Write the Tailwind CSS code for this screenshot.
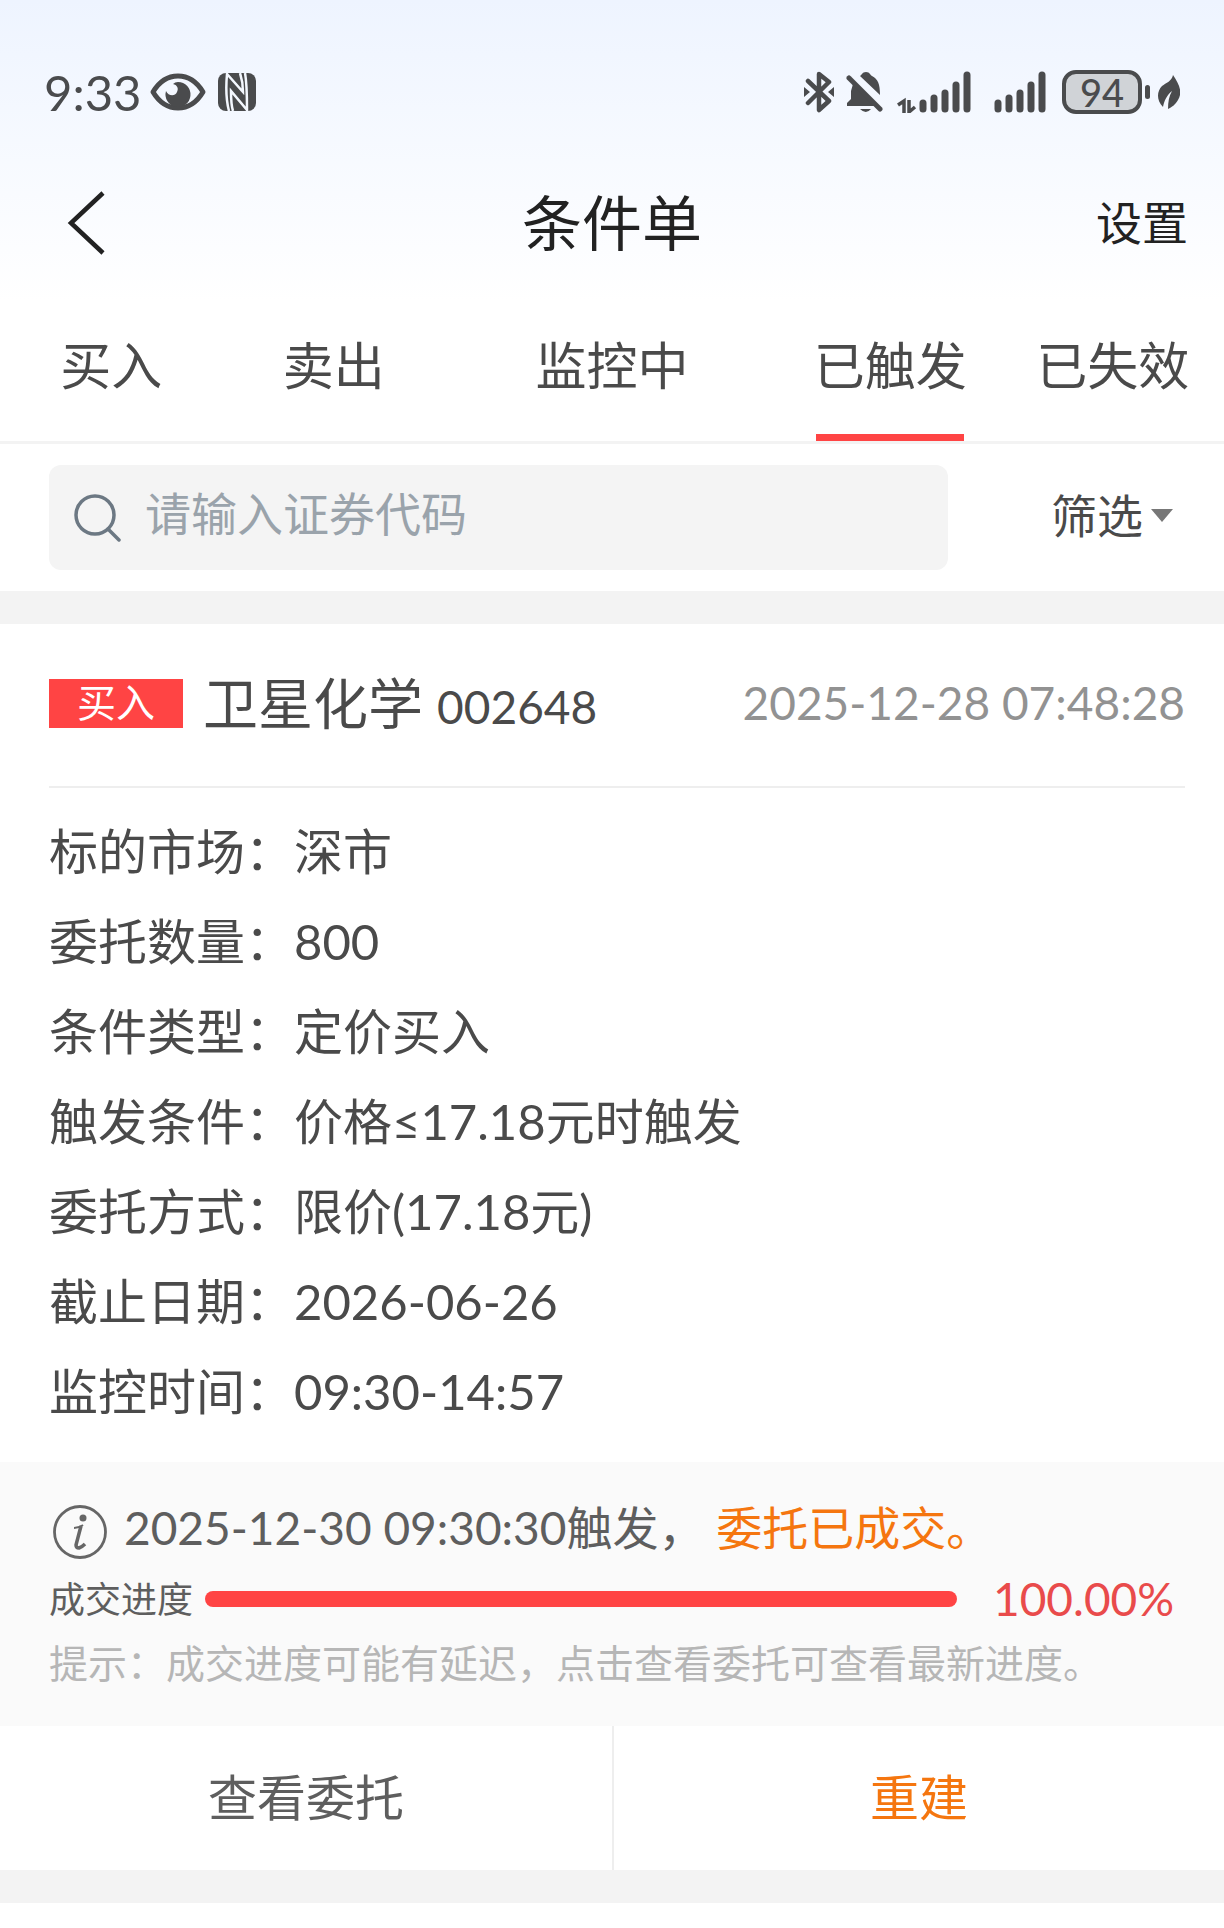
<!DOCTYPE html>
<html lang="zh-CN">
<head>
	<meta charset="UTF-8">
	<meta name="viewport" content="width=device-width, initial-scale=1.0">
	<script src="https://cdn.jsdelivr.net/npm/@tailwindcss/browser@4"></script>
	<title>条件单</title>
</head>

<body class="bg-white font-[Lato,'Noto_Sans_CJK_SC',sans-serif] text-[#4a4a4a]">
	<!-- Status bar + title -->
	<header class="bg-linear-to-b from-[#eef4ff] to-white">
		<div class="flex h-36 items-center justify-between pt-10 pr-11 pl-11 text-[#4a4b4d]">
			<div class="flex items-center">
				<span class="text-[49px] leading-none">9:33</span>
				<svg class="ml-2 h-10 w-14" viewBox="0 0 56 40" fill="none">
					<path d="M3 20C9 10 18 4 28 4s19 6 25 16C47 30 38 36 28 36S9 30 3 20Z" stroke="currentColor" stroke-width="5" stroke-linejoin="round"/>
					<path d="M28 10a12.500 12.500 0 1 1-12 9c2 5 9 6 11 1 2-4 0-7-4-8q2-2 5-2Z" fill="currentColor"/>
				</svg>
				<svg class="ml-3 h-[38px] w-[38px]" viewBox="0 0 38 38">
					<rect width="38" height="38" rx="8" fill="currentColor"/>
					<path d="M11 38C8 27 8 12 9 1l16 18C25 12 24 6 22 0M27 0c2 11 2 26 2 37L13 18c0 8 0 14 2 20" fill="none" stroke="#f4f8ff" stroke-width="2.500"/>
				</svg>
			</div>
			<div class="flex items-center">
				<svg class="h-[42px] w-[30px]" viewBox="0 0 30 42" fill="none">
					<path d="M4 10l21 20-10 9V3l10 8L4 32" stroke="currentColor" stroke-width="4.5" stroke-linejoin="round" stroke-linecap="round"/>
					<path d="M0 16l6 5-6 5zM30 16l-6 5 6 5z" fill="currentColor"/>
				</svg>
				<svg class="ml-3 h-[42px] w-[38px]" viewBox="0 0 38 42">
					<path d="M14 5c2-1 2-4 6-4s4 3 6 4c6 3 8 8 8 19z" fill="currentColor"/>
					<path d="M7 13L30 35H1v-3l4-4V20z" fill="currentColor"/>
					<path d="M3 7l31 31" stroke="currentColor" stroke-width="5" stroke-linecap="round"/>
					<path d="M14 38h11q-5 6-11 0z" fill="currentColor"/>
				</svg>
				<svg class="ml-3 h-[42px] w-[76px]" viewBox="0 0 76 42" fill="none" stroke="currentColor">
					<path d="M2 34l6-4v12M13 29v12l6-5" stroke-width="3.5"/>
					<path d="M27 32v6M38 27v11M49 22v16M60 14v24M71 4v34" stroke-width="7" stroke-linecap="round"/>
				</svg>
				<svg class="ml-5 h-[42px] w-[54px]" viewBox="0 0 54 42" fill="none" stroke="currentColor">
					<path d="M6 32v6M17 27v11M28 22v16M39 14v24M50 4v34" stroke-width="7" stroke-linecap="round"/>
				</svg>
				<div class="ml-4 flex h-11 w-20 items-center justify-center rounded-[14px] border-4 border-current bg-[#d0d3d7] text-[38px] leading-none font-medium">94</div>
				<div class="ml-[3px] h-[14px] w-[5px] rounded-full bg-[#4a4b4d]"></div>
				<svg class="ml-2 h-[34px] w-[22px]" viewBox="0 0 22 34">
					<path d="M15 0c6 9 10 17 5 25-3 5-6 7-10 9 0-7 1-13 4-18C9 20 6 26 5 32-2 25-1 16 4 11 8 8 14 6 15 0Z" fill="currentColor"/>
				</svg>
			</div>
		</div>
		<div class="grid h-[158px] grid-cols-3 items-center px-9 text-[#222222]">
			<button class="ml-7 justify-self-start" aria-label="返回">
				<svg class="h-[66px] w-11" viewBox="0 0 44 66" fill="none">
					<path d="M39 3L7 33l32 30" stroke="currentColor" stroke-width="4.5"/>
				</svg>
			</button>
			<h1 class="text-center text-[60px] leading-none">条件单</h1>
			<button class="justify-self-end text-[46px] leading-none">设置</button>
		</div>
	</header>

	<nav class="grid grid-cols-11 border-b-3 border-[#f3f3f3] text-[51px] leading-[128px]">
		<button class="col-span-2 pb-[11px]">买入</button>
		<button class="col-span-2 pb-[11px]">卖出</button>
		<button class="col-span-3 pb-[11px]">监控中</button>
		<button class="col-span-2 flex flex-col items-center gap-1">已触发<span class="h-[7px] w-[148px] bg-[#ff4444]"></span></button>
		<button class="col-span-2 pb-[11px]">已失效</button>
	</nav>

	<!-- Search -->
	<div class="flex items-center py-[21px] pr-[51px] pl-[49px] text-[46px]">
		<label class="flex h-[105px] flex-1 items-center rounded-xl bg-[#f4f4f4] pl-[25px]">
			<svg class="h-[49px] w-[49px]" viewBox="0 0 49 49" fill="none" stroke="#6c7883" stroke-width="3.5" stroke-linecap="round">
				<circle cx="21" cy="22" r="19"/>
				<path d="M34 36l11 11"/>
			</svg>
			<input type="text" placeholder="请输入证券代码" aria-label="证券代码" class="ml-[22px] min-w-0 flex-1 pb-2 outline-none placeholder:text-[#9aa3ab]">
		</label>
		<button class="flex w-[225px] items-center justify-end gap-2 pb-1">
			筛选
			<svg class="h-[13px] w-[22px]" viewBox="0 0 22 13"><path d="M0 0h22L11 13z" fill="#777777"/></svg>
		</button>
	</div>

	<main class="border-y-[33px] border-[#f3f3f3]">
		<div class="mr-[39px] ml-[49px] flex h-[164px] items-center border-b-2 border-[#eeeeee] pb-1">
			<span class="h-[49px] w-[134px] bg-[#ff4444] text-center text-[39px] leading-[46px] text-white">买入</span>
			<h2 class="ml-5 text-[55px] leading-none">卫星化学 <span class="text-[46px]">002648</span></h2>
			<time class="ml-auto text-[46px] leading-none text-[#929292]">2025-12-28 07:48:28</time>
		</div>

		<dl class="grid grid-cols-[245px_1fr] px-[49px] pt-[18px] pb-[26px] text-[49px] leading-[90px]">
			<dt>标的市场：</dt><dd>深市</dd>
			<dt>委托数量：</dt><dd>800</dd>
			<dt>条件类型：</dt><dd>定价买入</dd>
			<dt>触发条件：</dt><dd>价格≤17.18元时触发</dd>
			<dt>委托方式：</dt><dd>限价(17.18元)</dd>
			<dt>截止日期：</dt><dd>2026-06-26</dd>
			<dt>监控时间：</dt><dd>09:30-14:57</dd>
		</dl>

		<!-- Trigger result -->
		<section class="bg-[#fafafa] px-[49px] pt-7 pb-8 text-[#5e5e5e]">
			<div class="flex items-center text-[46px] leading-[76px]">
				<svg class="mt-2 mr-4 ml-[3px] h-14 w-14" viewBox="0 0 56 56" fill="none" stroke="#666666">
					<circle cx="28" cy="28" r="25.5" stroke-width="2.8"/>
					<circle cx="31" cy="14" r="3.5" fill="#666666" stroke="none"/>
					<path d="M22 24q5 0 9-3" stroke-width="2"/>
					<path d="M29 22l-5 19q0 3 3 3 3-1 6-4" stroke-width="3.5"/>
				</svg>
				<p>2025-12-30 09:30:30触发， <span class="text-[#f5760f]">委托已成交。</span></p>
			</div>
			<div class="flex items-center leading-[66px]">
				<span class="text-[36px]">成交进度</span>
				<div class="ml-3 h-4 flex-1 rounded-full" role="progressbar" aria-label="成交进度" aria-valuenow="100">
					<div class="h-4 rounded-full bg-[#ff4444]" style="width: 100%"></div>
				</div>
				<span class="w-[218px] pl-9 text-[46px] text-[#e94b4b]">100.00%</span>
			</div>
			<p class="text-[39px] leading-[62px] text-[#b6b6b6]">提示：成交进度可能有延迟，点击查看委托可查看最新进度。</p>
		</section>

		<div class="grid h-36 grid-cols-2 text-[49px] text-[#5e5e5e]">
			<button>查看委托</button>
			<button class="border-l-2 border-[#eeeeee] text-[#f5760f]">重建</button>
		</div>
	</main>
</body>
</html>
